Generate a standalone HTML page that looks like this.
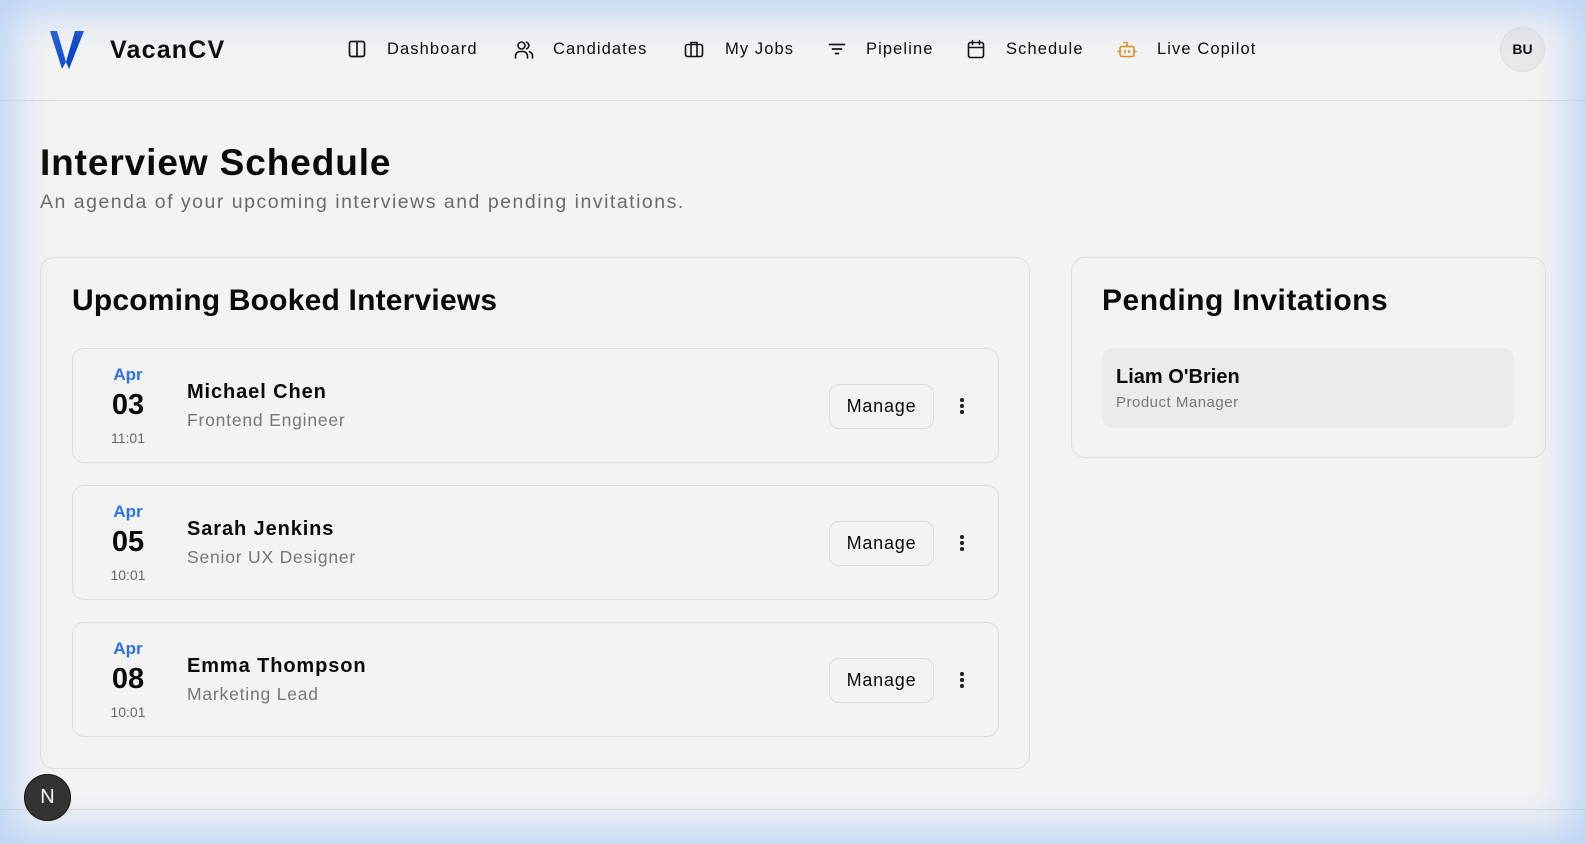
<!DOCTYPE html>
<html><head><meta charset="utf-8"><style>
*{box-sizing:border-box;margin:0;padding:0}
html,body{width:1585px;height:844px;overflow:hidden}
body{background:#f3f3f3;font-family:"Liberation Sans",sans-serif;color:#0a0a0a;position:relative}
.glow{position:absolute;inset:0;pointer-events:none;box-shadow:inset 0 0 40px 14px rgba(170,200,245,.75);z-index:5}
.hdr{position:absolute;left:0;top:0;width:1585px;height:101px;border-bottom:1px solid #dcdcdc}
.abs{position:absolute;white-space:nowrap}
.nav{font-size:16.5px;font-weight:500;top:40px;letter-spacing:1.1px}
.ic{position:absolute;top:40px}
.card{position:absolute;border:1px solid #dedede;border-radius:14px;background:#f3f3f3}
.item{position:absolute;left:72px;width:927px;height:115px;border:1px solid #dcdcdc;border-radius:12px}
.mon{position:absolute;left:0;width:110px;text-align:center;color:#2f6fea;font-weight:bold;font-size:17px;top:16px}
.day{position:absolute;left:0;width:110px;text-align:center;font-weight:bold;font-size:29px;top:40px}
.tm{position:absolute;left:0;width:110px;text-align:center;color:#666;font-size:14px;top:81px}
.nm{position:absolute;left:114px;top:32px;font-size:20px;font-weight:bold;letter-spacing:.9px}
.rl{position:absolute;left:114px;top:61px;font-size:17.5px;color:#777;letter-spacing:.8px}
.btn{position:absolute;left:756px;top:35px;width:105px;height:45px;border:1px solid #dadada;border-radius:10px;font-size:18px;text-align:center;line-height:43px;letter-spacing:.8px}
.dots{position:absolute;left:887px;top:49px;width:4px}
.dots i{display:block;width:3.5px;height:3.5px;border-radius:50%;background:#222;margin-bottom:2.5px}
</style></head><body>
<div class="hdr"></div>
<svg class="abs" style="left:48px;top:29px" width="38" height="42" viewBox="0 0 38 42"><path d="M2 2 L9 2 L18 33 L14 40 Z" fill="#1553d6"/><path d="M27 2 L36 2 L21 40 L18 33 Z" fill="#0b46c9"/></svg>
<div class="abs" style="left:110px;top:36px;font-size:25px;font-weight:bold;letter-spacing:1.2px">VacanCV</div>

<svg class="ic" style="left:348px" width="18" height="18" viewBox="0 0 18 18" fill="none" stroke="#111" stroke-width="1.7"><rect x="1.5" y="1.5" width="15" height="15" rx="2"/><path d="M9 1.5V16.5"/></svg>
<div class="abs nav" style="left:387px">Dashboard</div>
<svg class="ic" style="left:514px" width="20" height="19" viewBox="0 0 20 19" fill="none" stroke="#111" stroke-width="1.6" stroke-linecap="round"><circle cx="7.5" cy="5.5" r="3.5"/><path d="M1.5 18v-2a4.5 4.5 0 0 1 4.5-4.5h3a4.5 4.5 0 0 1 4.5 4.5v2"/><path d="M12.5 2.2a3.5 3.5 0 0 1 0 6.6M15.5 11.7a4.5 4.5 0 0 1 3 4.3v2"/></svg>
<div class="abs nav" style="left:553px">Candidates</div>
<svg class="ic" style="left:684px" width="20" height="18" viewBox="0 0 20 18" fill="none" stroke="#111" stroke-width="1.6"><rect x="1.5" y="4.5" width="17" height="12" rx="2"/><path d="M7 4.5V2.5h6v2M7 4.5v12M13 4.5v12"/></svg>
<div class="abs nav" style="left:725px">My Jobs</div>
<svg class="ic" style="left:828px" width="18" height="18" viewBox="0 0 18 18" fill="none" stroke="#111" stroke-width="1.7" stroke-linecap="round"><path d="M1.5 4.5h15M4.5 9h9M7.5 13.5h3"/></svg>
<div class="abs nav" style="left:866px">Pipeline</div>
<svg class="ic" style="left:967px;top:39px" width="18" height="20" viewBox="0 0 18 20" fill="none" stroke="#111" stroke-width="1.6" stroke-linecap="round"><rect x="1.5" y="3.5" width="15" height="15" rx="2"/><path d="M5.5 1.5v4M12.5 1.5v4M1.5 8.5h15"/></svg>
<div class="abs nav" style="left:1006px">Schedule</div>
<svg class="ic" style="left:1117px;top:41px" width="20" height="18" viewBox="0 0 20 18" fill="none" stroke="#e48a1c" stroke-width="1.6" stroke-linecap="round"><path d="M10 5V1.5H7"/><rect x="3" y="5.5" width="14" height="10" rx="2"/><path d="M1 10.5h2M17 10.5h2M8 9.5v2M12 9.5v2"/></svg>
<div class="abs nav" style="left:1157px">Live Copilot</div>
<div class="abs" style="left:1500px;top:27px;width:45px;height:45px;border-radius:50%;background:#e8e8e8;border:1px solid #ddd;text-align:center;line-height:43px;font-size:14px;font-weight:bold">BU</div>

<div class="abs" style="left:40px;top:142px;font-size:37px;font-weight:bold;letter-spacing:.9px">Interview Schedule</div>
<div class="abs" style="left:40px;top:191px;font-size:19.5px;color:#6b6b6b;letter-spacing:1.5px">An agenda of your upcoming interviews and pending invitations.</div>

<div class="card" style="left:40px;top:257px;width:990px;height:512px"></div>
<div class="abs" style="left:72px;top:284px;font-size:30px;font-weight:bold;letter-spacing:.2px">Upcoming Booked Interviews</div>

<div class="item" style="top:348px"><div class="mon">Apr</div><div class="day">03</div><div class="tm">11:01</div><div class="nm">Michael Chen</div><div class="rl">Frontend Engineer</div><div class="btn">Manage</div><div class="dots"><i></i><i></i><i></i></div></div>
<div class="item" style="top:485px"><div class="mon">Apr</div><div class="day">05</div><div class="tm">10:01</div><div class="nm">Sarah Jenkins</div><div class="rl">Senior UX Designer</div><div class="btn">Manage</div><div class="dots"><i></i><i></i><i></i></div></div>
<div class="item" style="top:622px"><div class="mon">Apr</div><div class="day">08</div><div class="tm">10:01</div><div class="nm">Emma Thompson</div><div class="rl">Marketing Lead</div><div class="btn">Manage</div><div class="dots"><i></i><i></i><i></i></div></div>

<div class="card" style="left:1071px;top:257px;width:475px;height:201px"></div>
<div class="abs" style="left:1102px;top:284px;font-size:30px;font-weight:bold;letter-spacing:.5px">Pending Invitations</div>
<div class="abs" style="left:1102px;top:348px;width:412px;height:80px;border-radius:10px;background:#ebebeb"></div>
<div class="abs" style="left:1116px;top:366px;font-size:20px;font-weight:bold">Liam O'Brien</div>
<div class="abs" style="left:1116px;top:394px;font-size:15px;color:#777;letter-spacing:.5px">Product Manager</div>

<div class="abs" style="left:0;top:809px;width:1585px;border-top:1px solid #d8d8d8"></div>
<div class="abs" style="left:24px;top:774px;width:47px;height:47px;border-radius:50%;background:#333;border:1px solid #111;color:#fff;text-align:center;line-height:45px;font-size:20px;z-index:6">N</div>
<div class="glow"></div>
</body></html>
